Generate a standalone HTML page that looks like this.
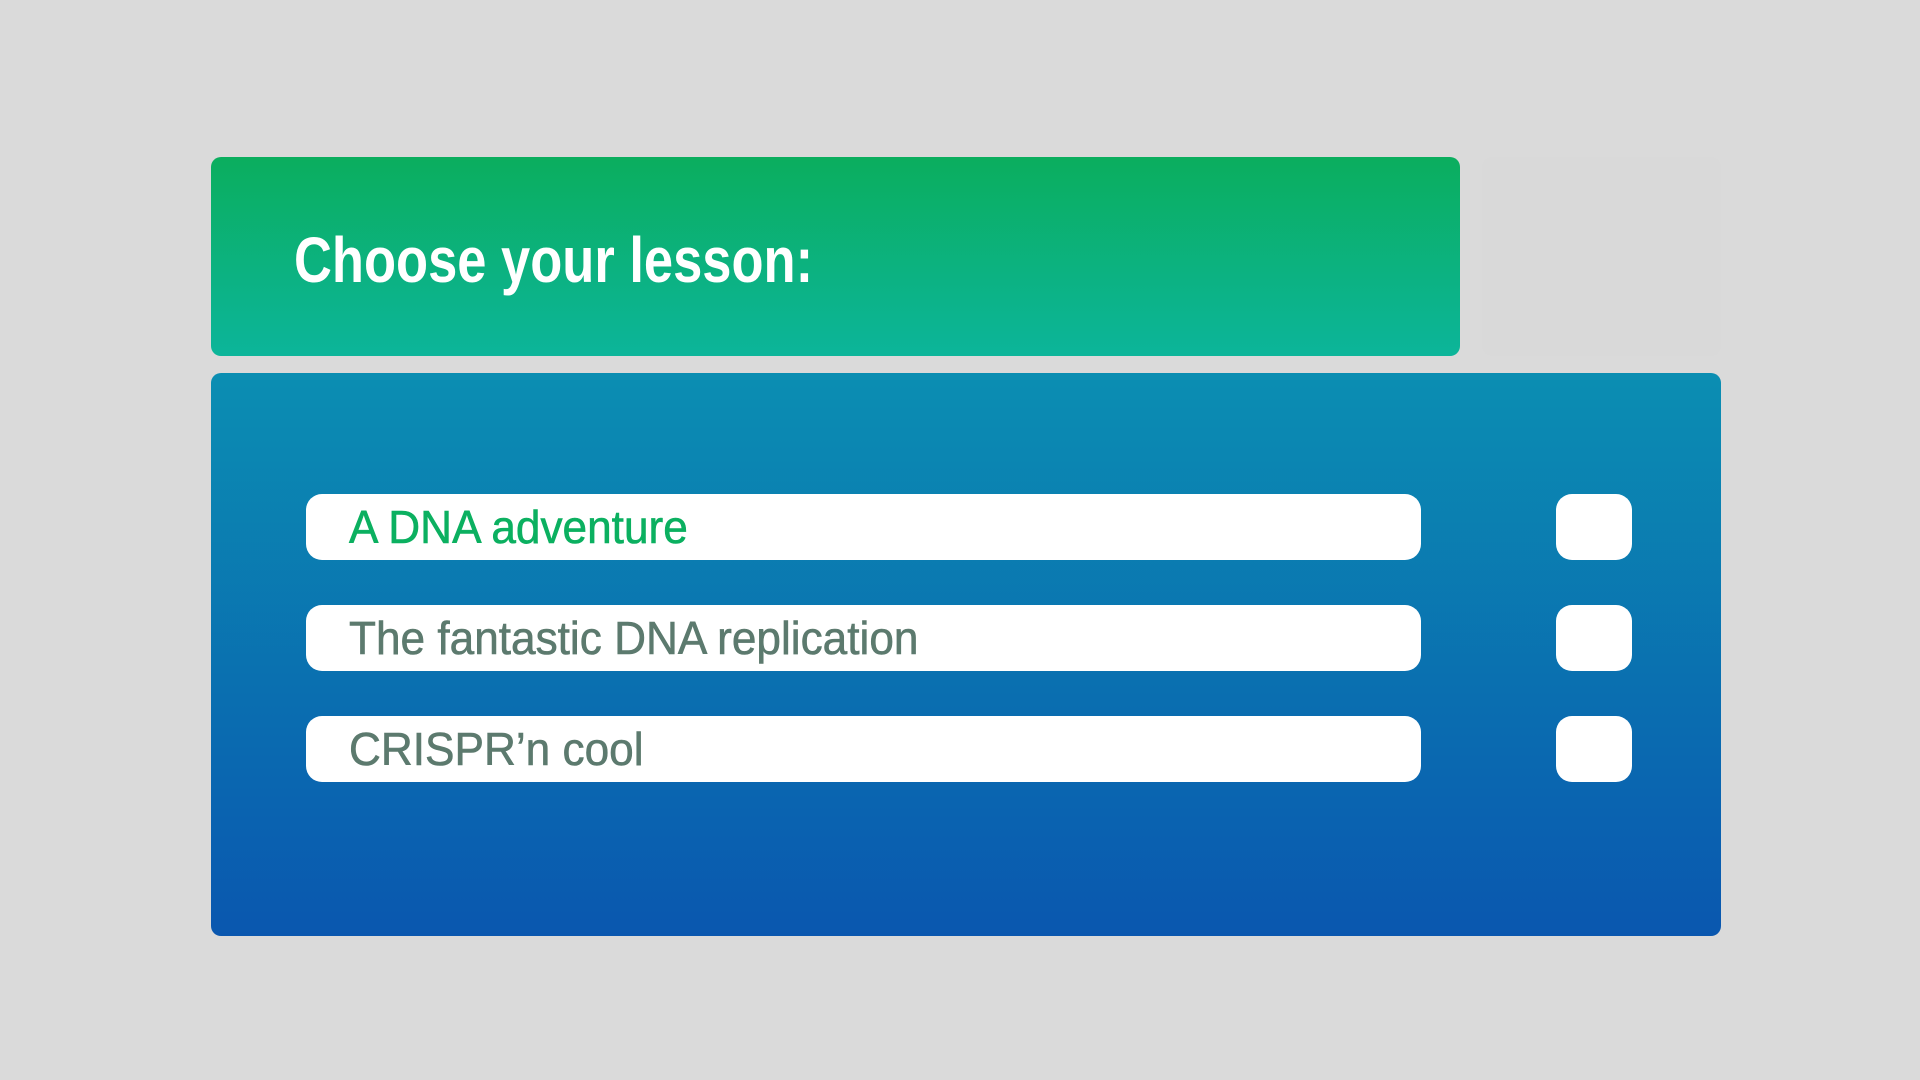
<!DOCTYPE html>
<html><head><style>
body{margin:0;width:1920px;height:1080px;background:#dadada;position:relative;overflow:hidden;font-family:"Liberation Sans",sans-serif;}
.g{position:absolute;left:211px;top:157px;width:1249px;height:199px;border-radius:10px;background:linear-gradient(#0bae5e,#0cb59a);}
.f{position:absolute;left:1482px;top:157px;width:239px;height:199px;border-radius:10px;background:#d9d9d9;}
.b{position:absolute;left:211px;top:373px;width:1510px;height:563px;border-radius:10px;background:linear-gradient(#0b8eb2,#0a57af);}
.t{position:absolute;left:294px;top:228px;font-size:64px;color:#fff;font-weight:bold;white-space:nowrap;transform:scaleX(0.82);transform-origin:left;line-height:64px;}
.r{position:absolute;left:306px;width:1115px;height:66px;background:#fff;border-radius:16px;}
.r span{position:absolute;left:43px;top:10px;font-size:46px;line-height:46px;white-space:nowrap;transform:scaleX(0.96);transform-origin:left;color:#5c7a6e;-webkit-text-stroke:0.6px currentColor;}
.s{position:absolute;left:1556px;width:76px;height:66px;background:#fff;border-radius:16px;}
</style></head><body>
<div class="g"></div><div class="f"></div><div class="b"></div>
<div class="t">Choose your lesson:</div>
<div class="r" style="top:494px"><span style="color:#0bb060">A DNA adventure</span></div>
<div class="r" style="top:605px"><span>The fantastic DNA replication</span></div>
<div class="r" style="top:716px"><span>CRISPR’n cool</span></div>
<div class="s" style="top:494px"></div>
<div class="s" style="top:605px"></div>
<div class="s" style="top:716px"></div>
</body></html>
